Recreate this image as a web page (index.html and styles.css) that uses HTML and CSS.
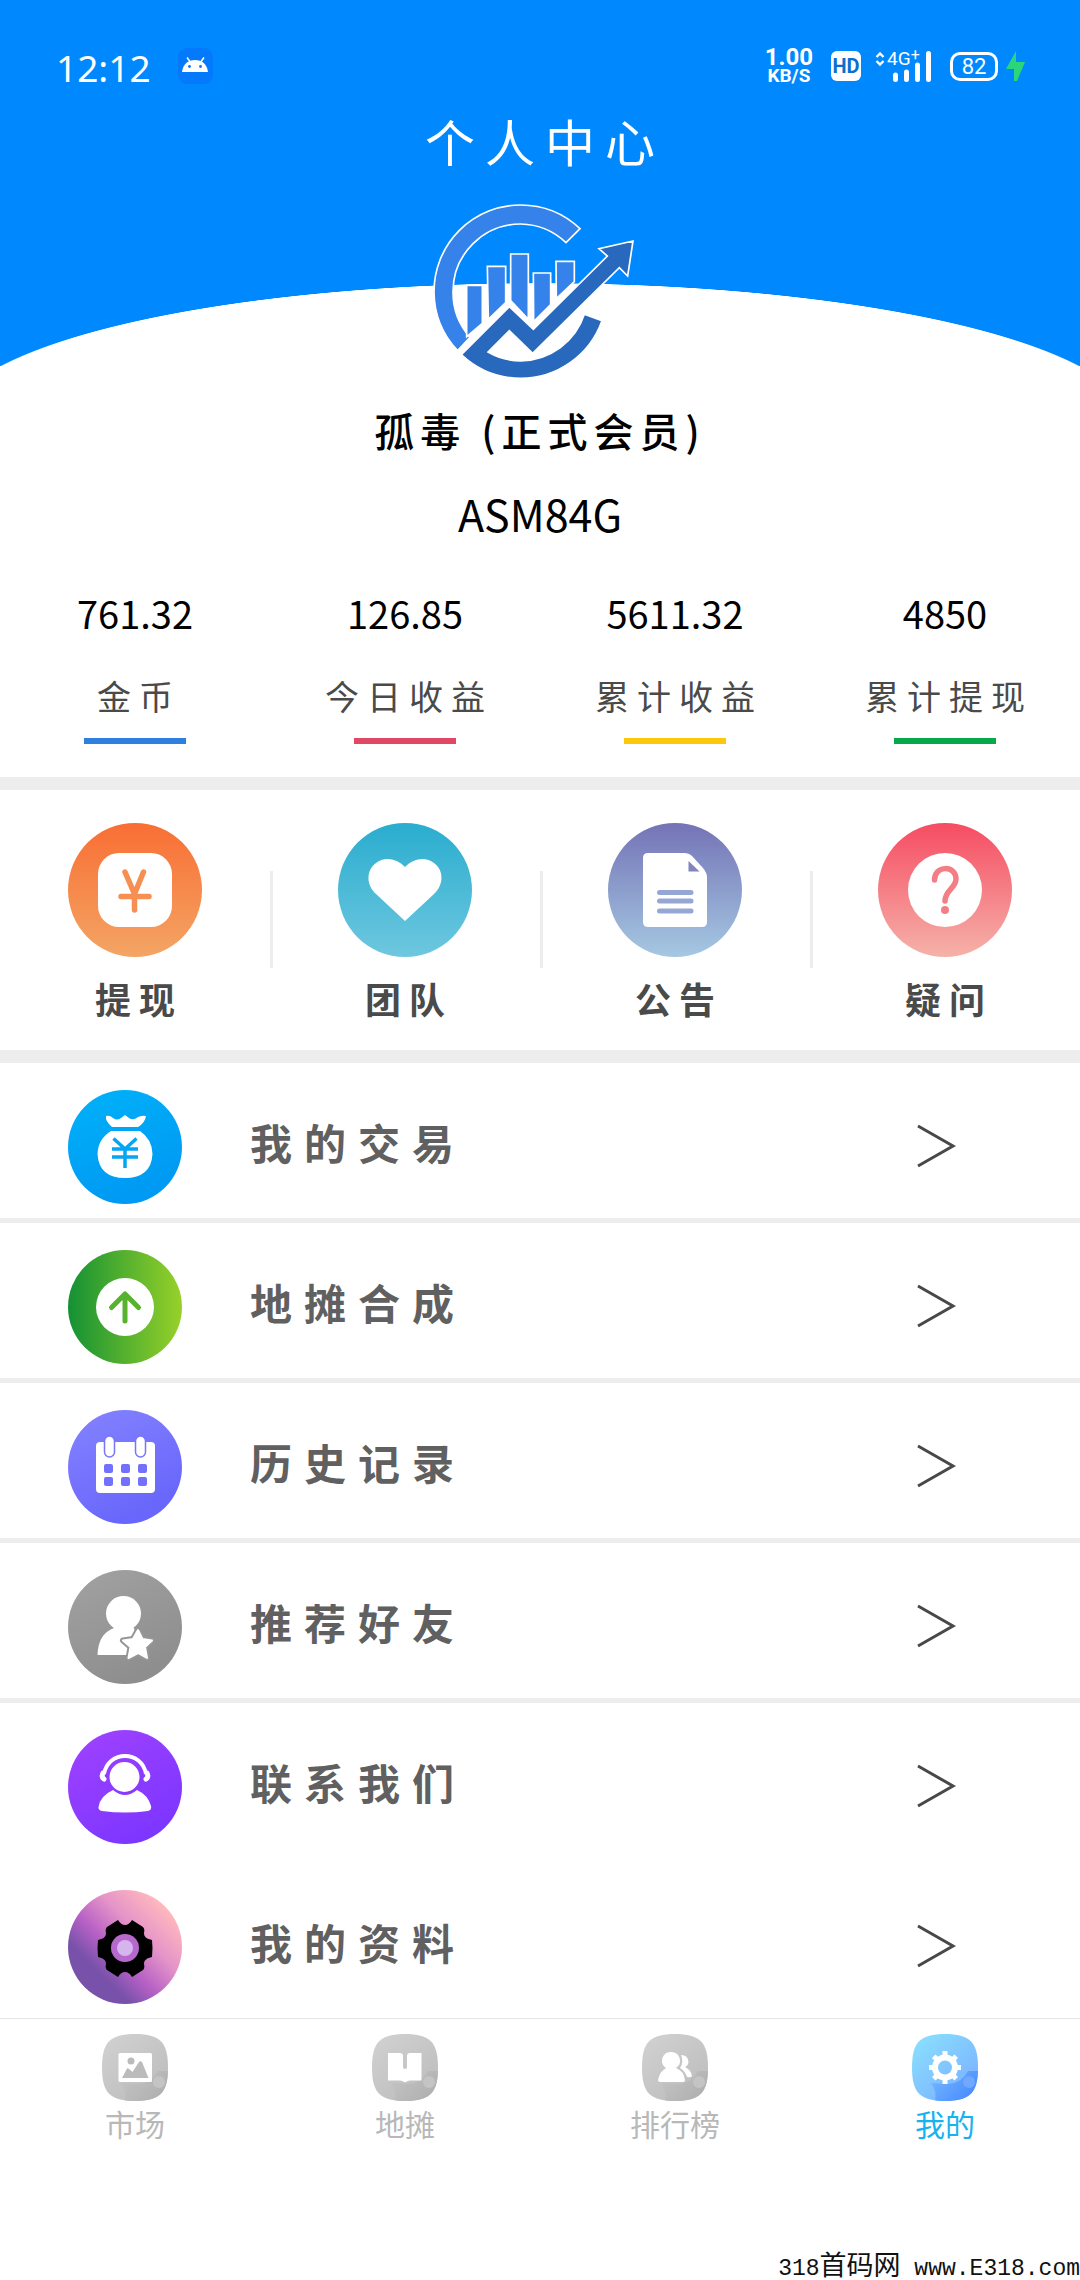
FILE: index.html
```html
<!DOCTYPE html>
<html lang="zh-CN">
<head>
<meta charset="utf-8">
<meta name="viewport" content="width=device-width, initial-scale=1">
<title>个人中心</title>
<link rel="stylesheet" href="styles.css">
</head>
<body>
<header class="hero">
  <div class="status">
    <span class="clock">12:12</span>
    <svg class="robot" viewBox="0 0 35 36" aria-hidden="true">
      <rect width="35" height="36" rx="9" fill="#0579fc"/>
      <path d="M4 24C5 16 10 12 17 12S29 16 30 24Z" fill="#fff"/>
      <path d="M9 9.500L13 15M26 9.500L22 15" stroke="#fff" stroke-width="1.500"/>
      <circle cx="11.500" cy="18.500" r="1.400" fill="#0579fc"/><circle cx="22.500" cy="18.500" r="1.400" fill="#0579fc"/>
    </svg>
    <span class="speed"><b class="rate">1.00</b><b class="unit">KB/S</b></span>
    <span class="hd">HD</span>
    <span class="signal">
      <svg class="updown" viewBox="0 0 10 16" aria-hidden="true"><path d="M1.500 6L5 2.500L8.500 6M1.500 10L5 13.500L8.500 10" fill="none" stroke="#fff" stroke-width="2.400"/></svg>
      <span class="net">4G<sup>+</sup></span>
      <svg class="bars" viewBox="0 0 38 31" aria-hidden="true"><path d="M2.500 24V28.500M13.500 21V28.500M24.500 14V28.500M35.500 2.500V28.500" stroke="#fff" stroke-width="5" stroke-linecap="round"/></svg>
    </span>
    <span class="battery">82</span>
    <svg class="bolt" viewBox="0 0 20 30" aria-hidden="true"><path d="M10 0L0 18H8V30H11L19 11H10Z" fill="#2bd67b"/></svg>
  </div>
  <h1 class="title">个人中心</h1>
  <svg class="logo" viewBox="99 69 606 531" role="img" aria-label="头像">
    <g stroke="#fff" stroke-width="5">
      <path fill="#3582ea" d="M540 146A260 260 0 0 0 362 75A260 260 0 0 0 102 335A260 260 0 0 0 173 512L210 472A203 203 0 0 1 159 335A203 203 0 0 1 362 132A203 203 0 0 1 498 188Z"/>
      <path fill="#3582ea" d="M200 316H247V430L200 470ZM262 259H317V368L265 418ZM332 222H385V418L332 362ZM400 279H452V374L401 425ZM468 244H523V305L469 356Z"/>
      <path fill="#2868bd" d="M184 524L328 380L400 448L622 228L597 206L699 183L683 288L658 263L398 520L328 452L264 516A203 203 0 0 0 362 543A203 203 0 0 0 553 403L606 422A260 260 0 0 1 362 595A260 260 0 0 1 184 524Z"/>
    </g>
  </svg>
</header>

<main class="content">
  <section class="profile">
    <h2 class="name">孤毒 (正式会员)</h2>
    <p class="code">ASM84G</p>
    <dl class="stats">
      <div class="stat blue"><dd>761.32</dd><dt>金币</dt></div>
      <div class="stat red"><dd>126.85</dd><dt>今日收益</dt></div>
      <div class="stat yellow"><dd>5611.32</dd><dt>累计收益</dt></div>
      <div class="stat green"><dd>4850</dd><dt>累计提现</dt></div>
    </dl>
  </section>

  <nav class="quick" aria-label="快捷入口">
    <a class="quick-item" href="#withdraw">
      <svg class="quick-icon" viewBox="0 0 134 134" aria-hidden="true">
        <linearGradient id="q1" x2="0" y2="1"><stop stop-color="#f96e34"/><stop offset="1" stop-color="#f3a564"/></linearGradient>
        <circle cx="67" cy="67" r="67" fill="url(#q1)"/>
        <rect x="30" y="30" width="74" height="74" rx="21" fill="#fff"/>
        <path d="M57 49L66.500 71L75.500 49M53 73.500H81M66.500 71V87" fill="none" stroke="#f68f51" stroke-width="5.500" stroke-linecap="round"/>
      </svg>
      <span>提现</span>
    </a>
    <a class="quick-item" href="#team">
      <svg class="quick-icon" viewBox="0 0 134 134" aria-hidden="true">
        <linearGradient id="q2" x2="0" y2="1"><stop stop-color="#2aadcf"/><stop offset="1" stop-color="#6ec7df"/></linearGradient>
        <circle cx="67" cy="67" r="67" fill="url(#q2)"/>
        <path d="M67 44C59 36 47 33 38 40C28 47 28 62 38 71L67 98L96 71C106 62 106 47 96 40C87 33 75 36 67 44Z" fill="#fff"/>
      </svg>
      <span>团队</span>
    </a>
    <a class="quick-item" href="#notice">
      <svg class="quick-icon" viewBox="0 0 134 134" aria-hidden="true">
        <linearGradient id="q3" x2="0" y2="1"><stop stop-color="#7473b6"/><stop offset="1" stop-color="#a5c8e2"/></linearGradient>
        <circle cx="67" cy="67" r="67" fill="url(#q3)"/>
        <path d="M40 30H76Q81 30 84 33L95 45Q99 50 99 54V99Q99 104 94 104H40Q35 104 35 99V35Q35 30 40 30Z" fill="#fff"/>
        <path d="M80.500 38L91.500 48.500H80.500Z" fill="#8284be"/>
        <path d="M51.500 69.500H83M51.500 78H83M51.500 88H83" stroke="#95a7d2" stroke-width="5" stroke-linecap="round"/>
      </svg>
      <span>公告</span>
    </a>
    <a class="quick-item" href="#faq">
      <svg class="quick-icon" viewBox="0 0 134 134" aria-hidden="true">
        <linearGradient id="q4" x2="0" y2="1"><stop stop-color="#f64c62"/><stop offset="1" stop-color="#f5b2a9"/></linearGradient>
        <circle cx="67" cy="67" r="67" fill="url(#q4)"/>
        <circle cx="67" cy="67" r="37" fill="#fff"/>
        <path d="M56.500 57C56.500 42 78 42 78 56C78 65 67 67 67 78" fill="none" stroke="#f37f86" stroke-width="5.500" stroke-linecap="round"/>
        <circle cx="67" cy="87" r="4" fill="#f37f86"/>
      </svg>
      <span>疑问</span>
    </a>
  </nav>

  <ul class="menu">
    <li><a class="row" href="#trades">
      <svg class="row-icon" viewBox="0 0 114 114" aria-hidden="true">
        <linearGradient id="r1" x2=".4" y2="1"><stop stop-color="#00b2f9"/><stop offset="1" stop-color="#0099f3"/></linearGradient>
        <circle cx="57" cy="57" r="57" fill="url(#r1)"/>
        <path d="M44 37Q37 31 38 26Q42 25 45 28Q49 31 53 28L57 25L61 28Q65 31 70 27Q75 25 78 26Q77 33 70 37ZM43 41H72Q84 49 84.500 64Q83 88 57 88T29.500 64Q30 49 43 41Z" fill="#fff"/>
        <path d="M45.500 48.500L57 59L68.500 48.500M44 59H70M44 67H70M57 59V78" fill="none" stroke="#05a5f6" stroke-width="3.500"/>
      </svg>
      <span class="row-label">我的交易</span>
      <svg class="chevron" viewBox="0 0 38 42" aria-hidden="true"><path d="M1 1L36 21L1 41"/></svg>
    </a></li>
    <li><a class="row" href="#merge">
      <svg class="row-icon" viewBox="0 0 114 114" aria-hidden="true">
        <linearGradient id="r2"><stop stop-color="#149134"/><stop offset="1" stop-color="#97d129"/></linearGradient>
        <circle cx="57" cy="57" r="57" fill="url(#r2)"/>
        <circle cx="57" cy="57" r="29" fill="#fff"/>
        <path d="M57 44V71M43.500 57.500L57 44L70.500 57.500" fill="none" stroke="#57b22e" stroke-width="5" stroke-linecap="round" stroke-linejoin="round"/>
      </svg>
      <span class="row-label">地摊合成</span>
      <svg class="chevron" viewBox="0 0 38 42" aria-hidden="true"><path d="M1 1L36 21L1 41"/></svg>
    </a></li>
    <li><a class="row" href="#history">
      <svg class="row-icon" viewBox="0 0 114 114" aria-hidden="true">
        <linearGradient id="r3" x2=".5" y2="1"><stop stop-color="#8583ff"/><stop offset="1" stop-color="#6866fb"/></linearGradient>
        <circle cx="57" cy="57" r="57" fill="url(#r3)"/>
        <rect x="28" y="32" width="59" height="51" rx="4" fill="#fff"/>
        <g fill="#fff" stroke="#7775fd" stroke-width="1.500"><rect x="36.500" y="26" width="10" height="21" rx="5"/><rect x="67.500" y="26" width="10" height="21" rx="5"/></g>
        <g fill="#7371fc"><rect x="36" y="54" width="9" height="9" rx="2"/><rect x="53" y="54" width="9" height="9" rx="2"/><rect x="70" y="54" width="9" height="9" rx="2"/><rect x="36" y="67" width="9" height="9" rx="2"/><rect x="53" y="67" width="9" height="9" rx="2"/><rect x="70" y="67" width="9" height="9" rx="2"/></g>
      </svg>
      <span class="row-label">历史记录</span>
      <svg class="chevron" viewBox="0 0 38 42" aria-hidden="true"><path d="M1 1L36 21L1 41"/></svg>
    </a></li>
    <li><a class="row" href="#invite">
      <svg class="row-icon" viewBox="0 0 114 114" aria-hidden="true">
        <linearGradient id="r4" x2=".5" y2="1"><stop stop-color="#a2a2a2"/><stop offset="1" stop-color="#8e8e8e"/></linearGradient>
        <circle cx="57" cy="57" r="57" fill="url(#r4)"/>
        <circle cx="55.500" cy="43.500" r="17.500" fill="#fff"/>
        <path d="M29.500 85Q30 64 46 58Q56 55 66 58L72 85Z" fill="#fff"/>
        <path d="M70 60L74.500 69L84 70.500L77 77L79 88L70 83L60.500 88L62.500 77L55 70.500L65 69Z" fill="#969696" stroke="#969696" stroke-width="6" stroke-linejoin="round"/>
        <path d="M70 60L74.500 69L84 70.500L77 77L79 88L70 83L60.500 88L62.500 77L55 70.500L65 69Z" fill="#fff" stroke="#fff" stroke-width="2" stroke-linejoin="round"/>
      </svg>
      <span class="row-label">推荐好友</span>
      <svg class="chevron" viewBox="0 0 38 42" aria-hidden="true"><path d="M1 1L36 21L1 41"/></svg>
    </a></li>
    <li class="plain"><a class="row" href="#contact">
      <svg class="row-icon" viewBox="0 0 114 114" aria-hidden="true">
        <linearGradient id="r5" x2=".6" y2="1"><stop stop-color="#a142ff"/><stop offset="1" stop-color="#7d36ff"/></linearGradient>
        <circle cx="57" cy="57" r="57" fill="url(#r5)"/>
        <path d="M45 60Q32 66 30.500 77Q30 80 34 81Q57 84 80 81Q84 80 83 76Q80 65 69 60Q57 70 45 60Z" fill="#fff"/>
        <circle cx="56.500" cy="47" r="15" fill="#fff"/>
        <path d="M36 44C40 20 74 20 78 44" fill="none" stroke="#fff" stroke-width="4"/>
        <path d="M35 43Q33 47 36 49M79 43Q81 47 78 49" fill="none" stroke="#fff" stroke-width="5" stroke-linecap="round"/>
      </svg>
      <span class="row-label">联系我们</span>
      <svg class="chevron" viewBox="0 0 38 42" aria-hidden="true"><path d="M1 1L36 21L1 41"/></svg>
    </a></li>
    <li><a class="row" href="#profile">
      <svg class="row-icon" viewBox="0 0 114 114" aria-hidden="true">
        <linearGradient id="r6" x1=".15" y1=".85" x2=".85" y2=".15"><stop offset=".18" stop-color="#7852aa"/><stop offset=".4" stop-color="#b660c5"/><stop offset=".68" stop-color="#e594c8"/><stop offset="1" stop-color="#ffb8bd"/></linearGradient>
        <circle cx="57" cy="57" r="57" fill="url(#r6)"/>
        <path d="M50 30Q53 35 57 35T64 30L75 37Q77 39 76 43C76 47 79 49 84 50Q85 58 84 67C79 68 76 70 76 74Q77 78 75 80L64 87Q61 82 57 82T50 87L39 80Q37 78 38 74C38 70 35 68 30 67Q29 58 30 50C35 49 38 47 38 43Q37 39 39 37Z"/>
        <circle cx="57" cy="58" r="14" fill="#b668cc"/><circle cx="57" cy="58" r="8" fill="#d6b4ee"/>
      </svg>
      <span class="row-label">我的资料</span>
      <svg class="chevron" viewBox="0 0 38 42" aria-hidden="true"><path d="M1 1L36 21L1 41"/></svg>
    </a></li>
  </ul>
</main>

<nav class="tabs" aria-label="主导航">
  <a class="tab" href="#market">
    <svg class="tab-icon" viewBox="0 0 66 67" aria-hidden="true">
      <defs>
        <linearGradient id="tg" x2=".8" y2="1"><stop stop-color="#d2d2d2"/><stop offset="1" stop-color="#bcbcbc"/></linearGradient>
        <linearGradient id="td" x2="1" y2=".6"><stop stop-color="#c6c6c6"/><stop offset="1" stop-color="#b0b0b0"/></linearGradient>
        <clipPath id="tc"><path d="M33 0C58 0 66 8 66 33.500S58 67 33 67S0 59 0 33.500S8 0 33 0Z"/></clipPath>
        <g id="tile" clip-path="url(#tc)"><rect width="66" height="67" fill="url(#tg)"/><path d="M66 37H56Q50 49 36 50L19 49Q25 57 23 67H66Z" fill="url(#td)"/><circle cx="57" cy="48" r="6" fill="#c4c4c4"/></g>
      </defs>
      <use href="#tile"/>
      <rect x="16.500" y="19" width="33.500" height="29" rx="1.500" fill="#fff"/>
      <circle cx="29" cy="27" r="3.500" fill="#bbb"/><path d="M20 44L25 34.500Q26 34 27 35L30.500 38L37 28Q38.500 26.500 40 28L46.500 44Z" fill="#bbb"/>
    </svg>
    <span>市场</span>
  </a>
  <a class="tab" href="#stall">
    <svg class="tab-icon" viewBox="0 0 66 67" aria-hidden="true">
      <use href="#tile"/>
      <path d="M16 19H28Q31 19 31 22V33Q31 35 33 35T35 33V22Q35 19 38 19H49.500V46.500H39Q36 46.500 35 47.500Q33 49 31 47.500Q30 46.500 27 46.500H16Z" fill="#fff"/>
    </svg>
    <span>地摊</span>
  </a>
  <a class="tab" href="#ranking">
    <svg class="tab-icon" viewBox="0 0 66 67" aria-hidden="true">
      <use href="#tile"/>
      <path d="M29 18A8.700 8.700 0 0 1 34 34Q42 37 43 46Q43 48 41 48H18Q16 48 16 46Q18 37 24 34A8.700 8.700 0 0 1 29 18Z" fill="#fff"/>
      <path d="M39 21Q46 21 46.500 28Q46 32 43 33Q49 36 50 42Q49 44 45 43Q43 37 38 34Q42 28 39 21Z" fill="#fff"/>
    </svg>
    <span>排行榜</span>
  </a>
  <a class="tab active" href="#me" aria-current="page">
    <svg class="tab-icon" viewBox="0 0 66 67" aria-hidden="true">
      <linearGradient id="bg" x2=".9" y2="1"><stop stop-color="#8be3fe"/><stop offset="1" stop-color="#79acff"/></linearGradient>
      <linearGradient id="bd" x2="1" y2=".6"><stop stop-color="#78bcff"/><stop offset="1" stop-color="#4a8cff"/></linearGradient>
      <g clip-path="url(#tc)"><rect width="66" height="67" fill="url(#bg)"/><path d="M66 37H56Q50 49 36 50L19 49Q25 57 23 67H66Z" fill="url(#bd)"/><circle cx="57" cy="48" r="6" fill="#6fa8ff"/></g>
      <circle cx="33" cy="33.500" r="10" fill="none" stroke="#fff" stroke-width="6"/>
      <path d="M33 19.500V23M33 44V47.500M19.500 33.500H22M44 33.500H46.500M23.500 24L25.500 26M40.500 41L42.500 43M42.500 24L40.500 26M25.500 41L23.500 43" stroke="#fff" stroke-width="5" stroke-linecap="square" fill="none"/>
    </svg>
    <span>我的</span>
  </a>
</nav>
<footer class="source">318<span class="han">首码网</span> www.E318.com</footer>
</body>
</html>
```
FILE: styles.css
```css
* { box-sizing: border-box; margin: 0; padding: 0; }

body {
  display: flex;
  flex-direction: column;
  min-height: 100vh;
  background: #fff;
  color: #000;
  font-family: "Noto Sans CJK SC", "Noto Sans", sans-serif;
}

a { color: inherit; text-decoration: none; }
ul { list-style: none; }
svg { display: block; flex: none; }

.hero {
  display: flex;
  flex-direction: column;
  align-items: center;
  padding-top: 44px;
  background: radial-gradient(ellipse 55% 142px at 50% 425px, #fff 99.6%, #08f 100%) top / 100% 366px no-repeat;
  color: #fff;
}

.status {
  display: flex;
  align-items: center;
  align-self: stretch;
  height: 44px;
  padding: 0 54px 0 56px;
}
.clock { padding-top: 3px; font: 37px/44px "Noto Sans", sans-serif; }
.robot { width: 35px; height: 36px; margin-left: 27px; }
.speed {
  display: flex;
  flex-direction: column;
  align-items: center;
  margin-left: auto;
  font-family: Roboto, sans-serif;
}
.rate { font-size: 24px; line-height: 20px; }
.unit { font-size: 19px; line-height: 18px; }
.hd {
  margin-left: 18px;
  width: 30px;
  border-radius: 6px;
  background: #fff;
  color: #0b6fd0;
  font: bold 20px/30px Roboto, sans-serif;
  text-align: center;
}
.signal { display: grid; grid-template: 31px / 12px 6px 38px; margin-left: 14px; }
.updown { width: 10px; height: 16px; grid-area: 1 / 1; }
.net { grid-area: 1 / 2 / 2 / 4; font: 19px/16px Roboto, sans-serif; }
.net sup { font-size: 16px; line-height: 8px; vertical-align: 5px; }
.bars { width: 38px; height: 31px; grid-area: 1 / 3; }
.battery {
  width: 48px;
  margin-left: 19px;
  border: 3px solid #fff;
  border-radius: 10px;
  font: 22px/23px Roboto, sans-serif;
  text-align: center;
}
.bolt { width: 20px; height: 30px; margin-left: 8px; }

.title {
  margin-top: 22px;
  padding-left: 10px;
  font-size: 50px;
  font-weight: 400;
  line-height: 60px;
  letter-spacing: 10px;
}
.logo { width: 202px; height: 177px; margin-top: 33px; margin-right: 12px; }

.profile { padding: 20px 0 33px; text-align: center; }
.name {
  font-size: 40px;
  font-weight: 500;
  line-height: 60px;
  letter-spacing: 6px;
}
.code { margin-top: 23px; font-size: 43px; line-height: 60px; }
.stats { display: grid; grid-template-columns: repeat(4, 1fr); margin-top: 45px; }
.stat { display: flex; flex-direction: column; align-items: center; }
.stat dd { font-size: 38px; line-height: 50px; }
.stat dt {
  margin-top: 33px;
  padding-left: 8px;
  color: #4a4a4a;
  font-size: 34px;
  line-height: 50px;
  letter-spacing: 8px;
}
.stat::after { content: ""; width: 102px; height: 6px; margin-top: 17px; background: currentColor; }
.blue::after { color: #2f7fdf; }
.red::after { color: #e04866; }
.yellow::after { color: #fdc80b; }
.green::after { color: #06a94a; }

.quick {
  display: grid;
  grid-template-columns: repeat(4, 1fr);
  border: solid #ededed;
  border-width: 13px 0;
}
.quick-item {
  display: flex;
  flex-direction: column;
  align-items: center;
  padding: 33px 0 27px;
  color: #4a4a4a;
  font-size: 36px;
  font-weight: 700;
  line-height: 50px;
  letter-spacing: 8px;
}
.quick-item:not(:first-child) { background: linear-gradient(#ededed, #ededed) left 81px / 3px 97px no-repeat; }
.quick-icon { width: 134px; height: 134px; }
.quick-item span { margin-top: 16px; padding-left: 8px; }

.menu li { border-bottom: 5px solid #ededed; }
.menu .plain { border-color: #fff; }
.menu li:last-child { border: 0; }
.row { display: flex; align-items: center; padding: 27px 125px 14px 68px; }
.row-icon { width: 114px; height: 114px; }
.row-label {
  margin: 0 auto 10px 68px;
  color: #606060;
  font-size: 42px;
  font-weight: 700;
  line-height: 60px;
  letter-spacing: 12px;
}
.chevron { width: 38px; height: 42px; margin-bottom: 2px; fill: none; stroke: #484848; stroke-width: 3px; overflow: visible; }

.tabs {
  display: grid;
  grid-template-columns: repeat(4, 1fr);
  padding-top: 15px;
  border-top: 1px solid #e6e6e6;
}
.tab { display: flex; flex-direction: column; align-items: center; gap: 2px; color: #b8b8b8; font-size: 30px; line-height: 40px; }
.tab-icon { width: 66px; height: 67px; }
.tab.active { color: #17b3ee; }

.source {
  margin-top: auto;
  color: #111;
  font: 23px/22px "Liberation Mono", "Noto Sans CJK SC", monospace;
  text-align: right;
}
.han { font-size: 27px; }
```
